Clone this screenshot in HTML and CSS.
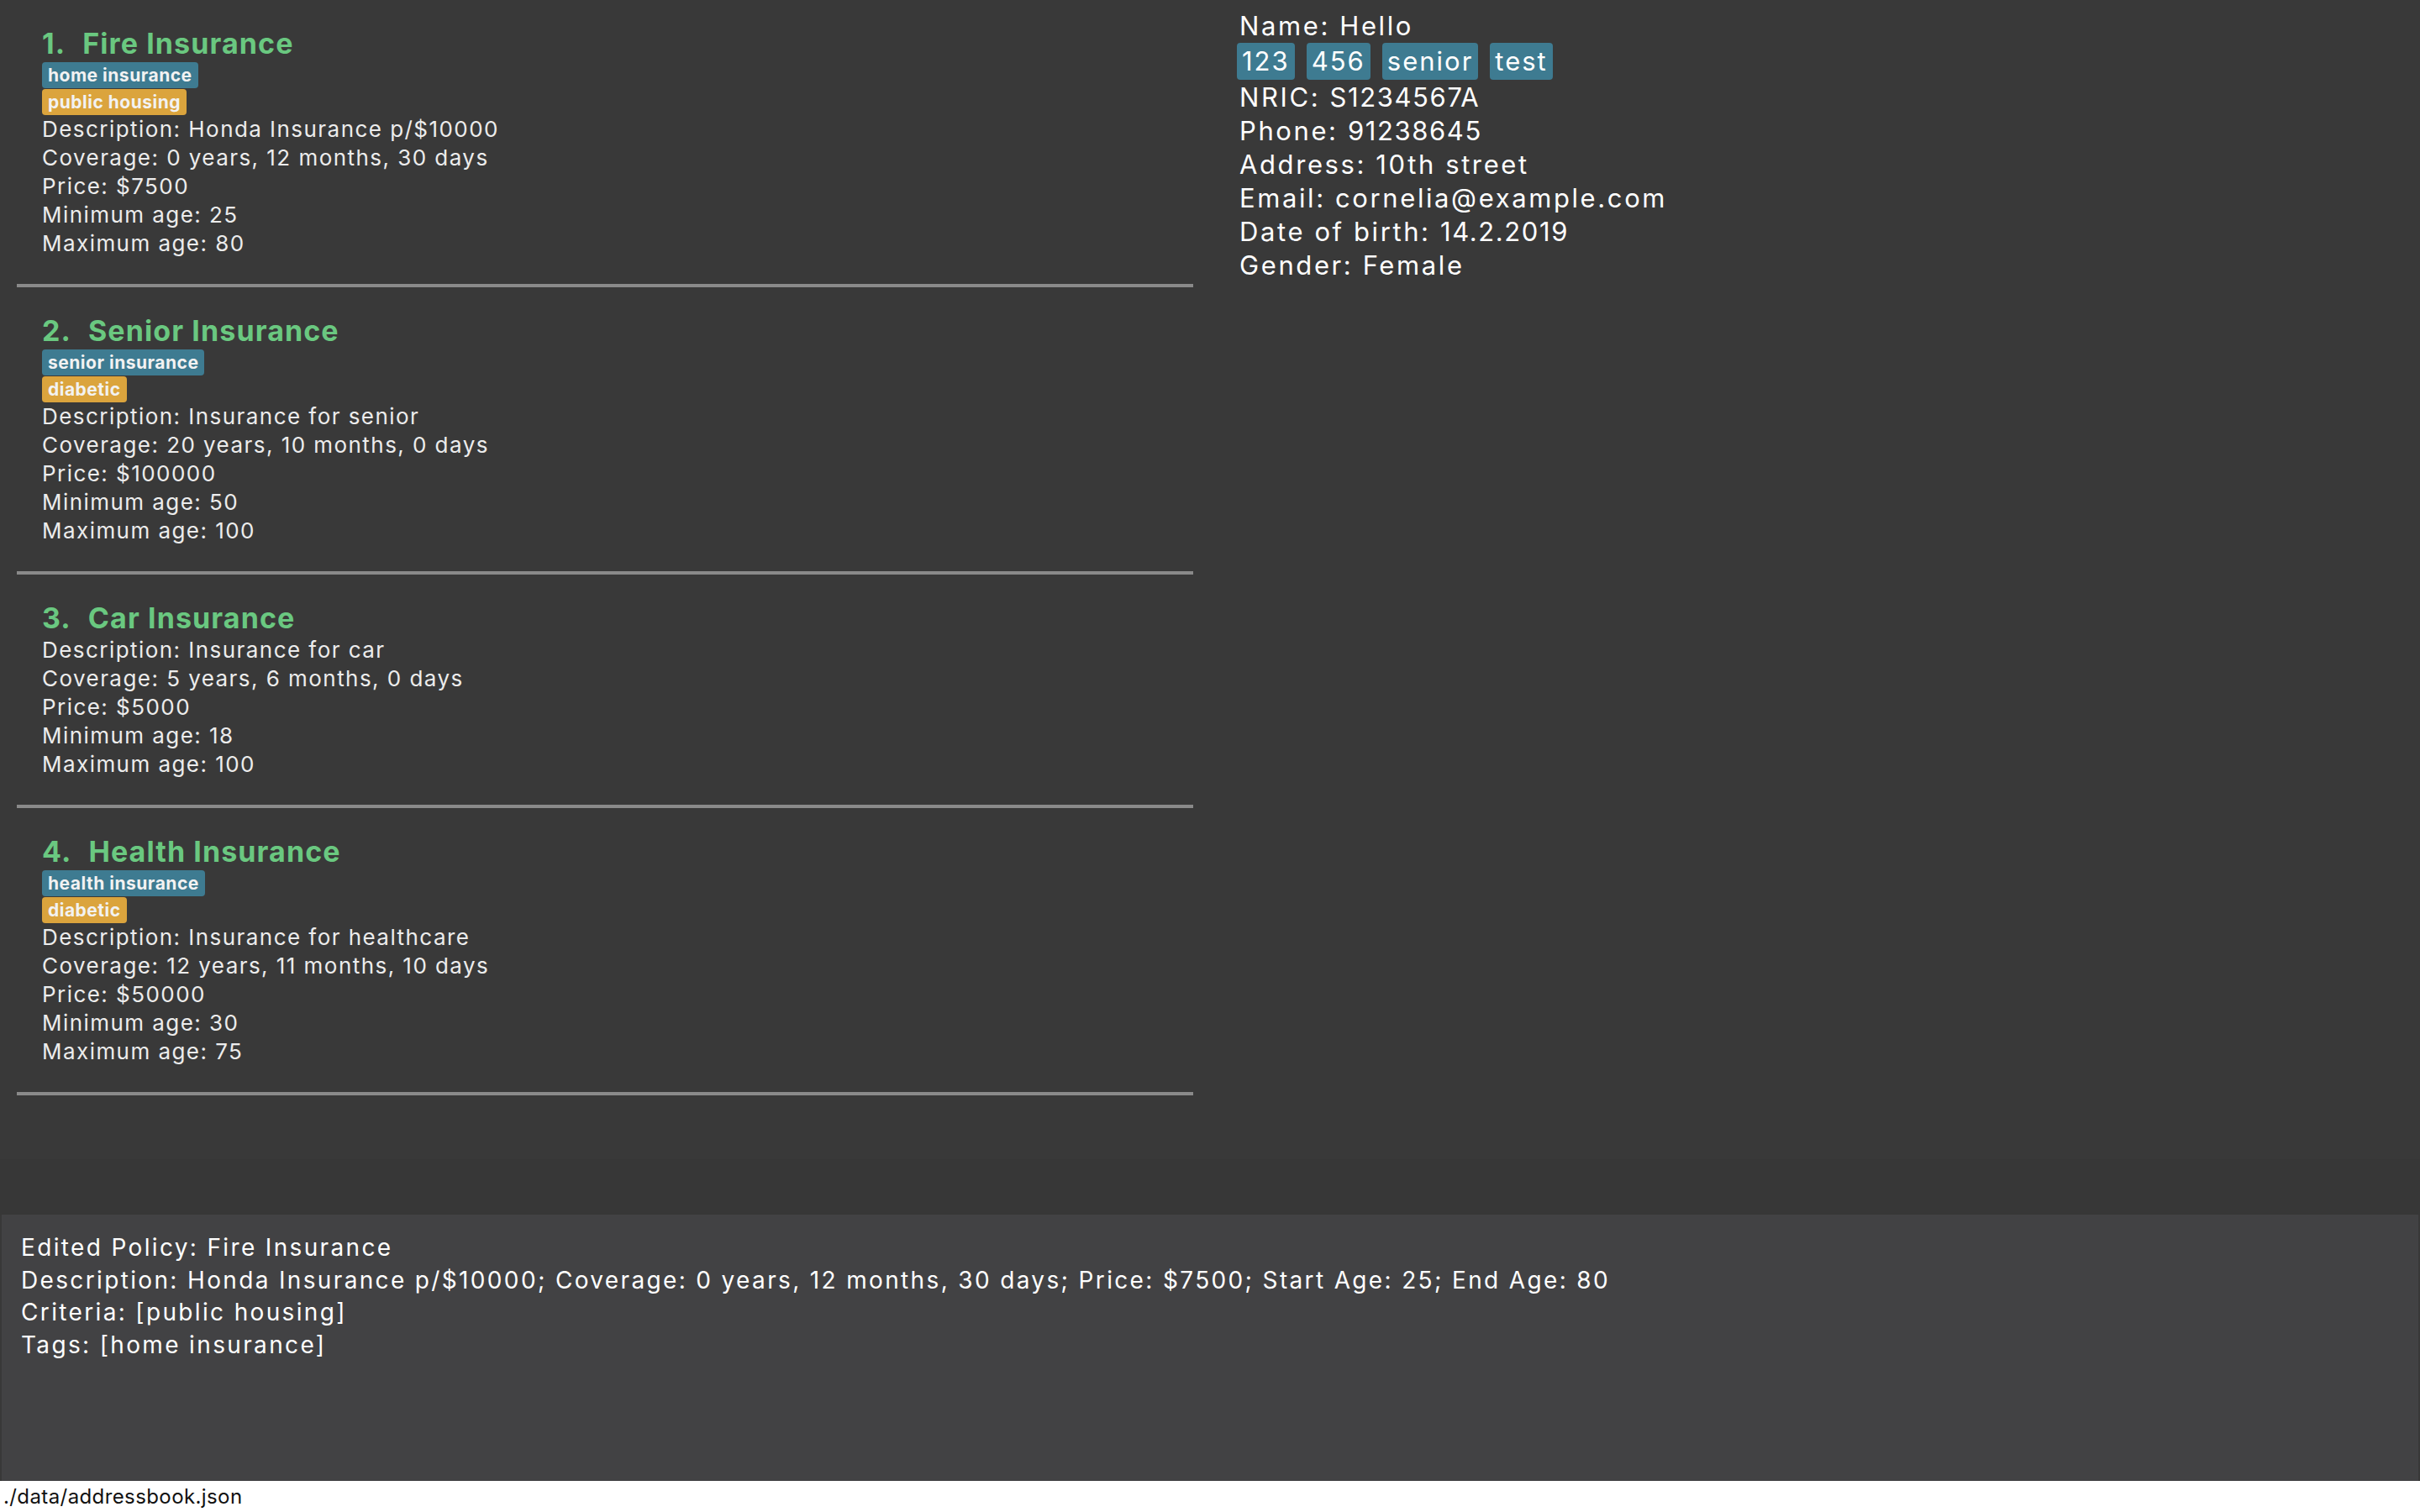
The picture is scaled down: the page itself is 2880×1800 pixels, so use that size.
FILE: index.html
```html
<!DOCTYPE html>
<html>
<head>
<meta charset="utf-8">
<link rel="stylesheet" href="styles.css">
</head>
<body>
<div class="app">
  <div class="main">
    <div class="policy-list">
      <div class="card">
        <div class="card-title"><span class="idx">1.</span><span class="name">Fire Insurance</span></div>
        <div class="card-tags"><span class="tag tag-blue">home insurance</span><span class="tag tag-orange">public housing</span></div>
        <div class="card-line">Description: Honda Insurance p/$10000</div>
        <div class="card-line">Coverage: 0 years, 12 months, 30 days</div>
        <div class="card-line">Price: $7500</div>
        <div class="card-line">Minimum age: 25</div>
        <div class="card-line">Maximum age: 80</div>
      </div>
      <div class="card">
        <div class="card-title"><span class="idx">2.</span><span class="name">Senior Insurance</span></div>
        <div class="card-tags"><span class="tag tag-blue">senior insurance</span><span class="tag tag-orange">diabetic</span></div>
        <div class="card-line">Description: Insurance for senior</div>
        <div class="card-line">Coverage: 20 years, 10 months, 0 days</div>
        <div class="card-line">Price: $100000</div>
        <div class="card-line">Minimum age: 50</div>
        <div class="card-line">Maximum age: 100</div>
      </div>
      <div class="card">
        <div class="card-title"><span class="idx">3.</span><span class="name">Car Insurance</span></div>
        <div class="card-line">Description: Insurance for car</div>
        <div class="card-line">Coverage: 5 years, 6 months, 0 days</div>
        <div class="card-line">Price: $5000</div>
        <div class="card-line">Minimum age: 18</div>
        <div class="card-line">Maximum age: 100</div>
      </div>
      <div class="card">
        <div class="card-title"><span class="idx">4.</span><span class="name">Health Insurance</span></div>
        <div class="card-tags"><span class="tag tag-blue">health insurance</span><span class="tag tag-orange">diabetic</span></div>
        <div class="card-line">Description: Insurance for healthcare</div>
        <div class="card-line">Coverage: 12 years, 11 months, 10 days</div>
        <div class="card-line">Price: $50000</div>
        <div class="card-line">Minimum age: 30</div>
        <div class="card-line">Maximum age: 75</div>
      </div>
    </div>
    <div class="detail">
      <div class="d-line">Name: Hello</div>
      <div class="d-tags"><span class="d-tag">123</span><span class="d-tag">456</span><span class="d-tag">senior</span><span class="d-tag">test</span></div>
      <div class="d-line">NRIC: <span class="num">S1234567A</span></div>
      <div class="d-line">Phone: <span class="num">91238645</span></div>
      <div class="d-line">Address: 10th street</div>
      <div class="d-line">Email: cornelia@example.com</div>
      <div class="d-line">Date of birth: <span class="num">14.2.2019</span></div>
      <div class="d-line">Gender: Female</div>
    </div>
  </div>
  <div class="gap"></div>
  <div class="result">
    <div class="r-line">Edited Policy: Fire Insurance</div>
    <div class="r-line">Description: Honda Insurance p/$10000; Coverage: 0 years, 12 months, 30 days; Price: $7500; Start Age: 25; End Age: 80</div>
    <div class="r-line">Criteria: [public housing]</div>
    <div class="r-line">Tags: [home insurance]</div>
  </div>
  <div class="status">./data/addressbook.json</div>
</div>
</body>
</html>
```

FILE: styles.css
```css
html, body {
  margin: 0;
  padding: 0;
}
body {
  background: #383838;
  font-family: Inter, "Open Sans", sans-serif;
  color: #ffffff;
}
.app {
  width: 2880px;
  height: 1800px;
  display: flex;
  flex-direction: column;
}
.main {
  height: 1380px;
  display: flex;
  flex-direction: row;
  background: #393939;
}
.policy-list {
  width: 1440px;
  display: flex;
  flex-direction: column;
}
.card {
  margin: 0 20px;
  padding: 32px 0 31px 30px;
  border-bottom: 4px solid #8a8a8a;
  display: flex;
  flex-direction: column;
  align-items: flex-start;
}
.card-title {
  display: flex;
  gap: 20px;
  font-size: 34px;
  line-height: 40px;
  font-weight: 700;
  color: #6ac880;
  letter-spacing: 1.1px;
  margin-bottom: 1px;
}
.card-tags {
  display: flex;
  flex-direction: column;
  align-items: flex-start;
  gap: 1px;
  margin-top: 1px;
}
.tag {
  height: 31px;
  line-height: 31px;
  padding: 0 7px;
  font-size: 21px;
  font-weight: 700;
  letter-spacing: 0.5px;
  color: #f2f2f2;
  border-radius: 4px;
}
.tag-blue {
  background: #3e7b91;
}
.tag-orange {
  background: #dba43d;
}
.card-line {
  font-size: 26px;
  line-height: 34px;
  color: #ececec;
  letter-spacing: 1.45px;
}
.detail {
  flex: 1;
  padding: 11px 0 0 35px;
  display: flex;
  flex-direction: column;
  align-items: flex-start;
}
.d-line {
  font-size: 31px;
  line-height: 40px;
  color: #ffffff;
  letter-spacing: 2.6px;
}
.num {
  letter-spacing: 1.6px;
}
.d-tags {
  display: flex;
  gap: 14px;
  height: 45px;
  align-items: flex-start;
  margin-left: -3px;
}
.d-tag {
  height: 44px;
  line-height: 44px;
  padding: 0 6px;
  font-size: 31px;
  background: #3e7b91;
  border-radius: 4px;
  letter-spacing: 2px;
}
.gap {
  height: 66px;
  background: #373737;
}
.result {
  height: 317px;
  margin: 0 2px;
  background: #424244;
  padding: 20px 0 0 23px;
  box-sizing: border-box;
}
.r-line {
  font-size: 28px;
  line-height: 38.5px;
  color: #ffffff;
  letter-spacing: 2.35px;
}
.status {
  height: 37px;
  background: #ffffff;
  color: #111111;
  font-size: 24px;
  line-height: 37px;
  letter-spacing: 0.4px;
  padding-left: 4px;
}
```
